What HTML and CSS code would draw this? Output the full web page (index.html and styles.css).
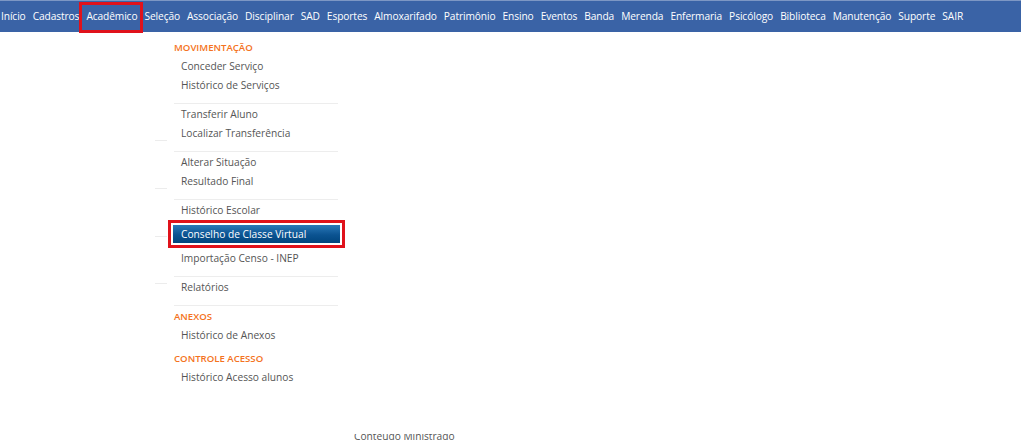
FILE: index.html
```html
<!DOCTYPE html>
<html lang="pt-BR">
<head>
  <meta charset="UTF-8" />
  <meta name="viewport" content="width=device-width, initial-scale=1.0" />
  <title>Acadêmico</title>
  <link rel="stylesheet" href="styles.css">
</head>
<body>
  <nav class="topbar">
    <ul class="menu">
      <li>Início</li>
      <li>Cadastros</li>
      <li class="active">Acadêmico</li>
      <li>Seleção</li>
      <li>Associação</li>
      <li>Disciplinar</li>
      <li>SAD</li>
      <li>Esportes</li>
      <li>Almoxarifado</li>
      <li>Patrimônio</li>
      <li>Ensino</li>
      <li>Eventos</li>
      <li>Banda</li>
      <li>Merenda</li>
      <li>Enfermaria</li>
      <li>Psicólogo</li>
      <li>Biblioteca</li>
      <li>Manutenção</li>
      <li>Suporte</li>
      <li>SAIR</li>
    </ul>
  </nav>

  <!-- pieces of the menu behind the open one -->
  <div class="ghost">
    <span class="ghost-line g1"></span>
    <span class="ghost-line g2"></span>
    <span class="ghost-line g3"></span>
    <span class="ghost-line g4"></span>
  </div>

  <div class="dropdown">
    <div class="heading">MOVIMENTAÇÃO</div>
    <div class="group">
      <div class="item">Conceder Serviço</div>
      <div class="item">Histórico de Serviços</div>
    </div>
    <div class="group">
      <div class="item">Transferir Aluno</div>
      <div class="item">Localizar Transferência</div>
    </div>
    <div class="group">
      <div class="item">Alterar Situação</div>
      <div class="item">Resultado Final</div>
    </div>
    <div class="group">
      <div class="item">Histórico Escolar</div>
      <div class="item selected">Conselho de Classe Virtual</div>
      <div class="item">Importação Censo - INEP</div>
    </div>
    <div class="group">
      <div class="item">Relatórios</div>
    </div>
    <div class="group last">
      <div class="heading">ANEXOS</div>
      <div class="item">Histórico de Anexos</div>
      <div class="heading second">CONTROLE ACESSO</div>
      <div class="item">Histórico Acesso alunos</div>
    </div>
  </div>

  <main class="content">
    <div class="clip"><span>Conteúdo Ministrado</span></div>
  </main>
</body>
</html>
```

FILE: styles.css
```css
body {
  margin: 0;
  font-family: "Open Sans", "DejaVu Sans", sans-serif;
  background: #fff;
  position: relative;
  height: 447px;
  overflow: hidden;
}
.topbar {
  width: 1021px;
  height: 32px;
  background-color: #3a63a6;
  border-top: 1px solid #7d97c4;
  box-sizing: border-box;
}
.menu {
  list-style: none;
  margin: 0;
  padding: 0 0 0 1px;
  display: flex;
  gap: 7px;
  height: 100%;
  align-items: center;
}
.menu li {
  color: #fff;
  font-size: 10.2px;
  letter-spacing: -0.1px;
  line-height: 31px;
}
.menu .active {
  position: relative;
}
.menu .active::after {
  content: "";
  position: absolute;
  left: -7px;
  right: -6px;
  top: 1px;
  bottom: -1px;
  border: 3px solid #e0121b;
}

.ghost-line {
  position: absolute;
  left: 155px;
  width: 12px;
  height: 1px;
  background: #ececec;
}
.g1 { top: 140px; }
.g2 { top: 188px; }
.g3 { top: 236px; }
.g4 { top: 283px; }

.dropdown {
  position: absolute;
  top: 32px;
  left: 174px;
  width: 164px;
  padding-top: 6px;
  font-size: 10.2px;
}
.heading {
  color: #f47221;
  font-weight: 600;
  font-size: 9.6px;
  line-height: 19px;
}
.heading.second {
  margin-top: 4px;
}
.group {
  padding: 0 0 8px;
}
.group + .group {
  border-top: 1px solid #ededed;
  padding-top: 1px;
}
.item {
  color: #555;
  line-height: 19px;
  padding-left: 7px;
}
.item.selected {
  margin: 5px -2px 6px -1px;
  padding-left: 8px;
  line-height: 18px;
  height: 18px;
  color: #fff;
  background: linear-gradient(#2a78b8, #0b5391 55%, #00457d);
  outline: 3px solid #e0121b;
  outline-offset: 2px;
}
.group.last {
  padding-bottom: 0;
}

.content {
  padding: 402px 0 0 354px;
}
.clip {
  height: 10px;
  overflow: hidden;
  font-size: 10.2px;
  color: #555;
}
.clip span {
  display: block;
  margin-top: -7px;
  line-height: 19px;
}
```
